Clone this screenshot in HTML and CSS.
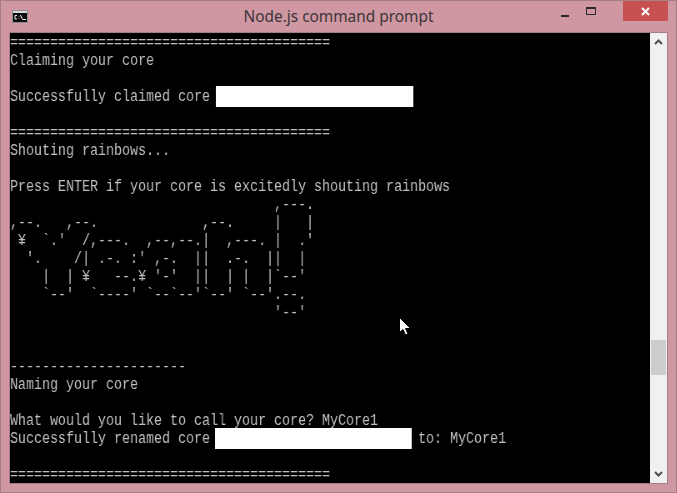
FILE: index.html
```html
<!DOCTYPE html>
<html lang="en">
<head>
<meta charset="utf-8">
<title>Node.js command prompt</title>
<link rel="stylesheet" href="styles.css">
</head>
<body>
<div class="window">
  <header class="titlebar">
    <svg class="app-icon" width="16" height="13" viewBox="0 0 16 13" aria-hidden="true">
      <rect x="0" y="0" width="16" height="13" fill="#8e8e8e"/>
      <rect x="1" y="1" width="14" height="2" fill="#d8d8d8"/>
      <rect x="1" y="3" width="14" height="9" fill="#0a0a0a"/>
      <path d="M5 5.500H3V9H5M7 6V6.500M7 8.500V9M8.500 5L10.500 9.500M11 9.500H14" fill="none" stroke="#f0f0f0" stroke-width="1"/>
    </svg>
    <div class="title">Node.js command prompt</div>
    <div class="controls">
      <div class="btn"><span class="min-glyph"></span></div>
      <div class="btn"><span class="max-glyph"></span></div>
      <div class="btn close">
        <svg width="9" height="9" viewBox="0 0 9 9" aria-hidden="true"><path d="M1 1L8 8M8 1L1 8" stroke="#fff" stroke-width="2"/></svg>
      </div>
    </div>
  </header>
  <main class="client">
    <div class="term">
      <div class="screen">
<pre class="block">========================================
Claiming your core

Successfully claimed core <span class="mask mask-a"></span></pre>
<pre class="block">

========================================
Shouting rainbows...

Press ENTER if your core is excitedly shouting rainbows
                                 ,---.
,--.   ,--.             ,--.     |   |
 ¥  `.'  /,---.  ,--,--.|  ,---. |  .'
  '.    /| .-. :' ,-.  ||  .-.  ||  |
    |  | ¥   --.¥ '-'  ||  | |  |`--'
    `--'  `----' `--`--'`--' `--'.--.
                                 '--'


----------------------
Naming your core

What would you like to call your core? MyCore1</pre>
<pre class="block">Successfully renamed core <span class="mask mask-b"></span> to: MyCore1</pre>
<pre class="block">

========================================</pre>
      </div>
      <svg class="pointer" width="13" height="19" viewBox="0 0 13 19" aria-hidden="true">
        <path d="M.5 .5V15.500L4 12.500L6.500 18L9 17L6.500 11.500H11.500Z" fill="#fff" stroke="#000" stroke-width="1"/>
      </svg>
    </div>
    <aside class="scrollbar">
      <svg class="arrow" width="9" height="6" viewBox="0 0 9 6" aria-hidden="true"><path d="M1 5L4.500 1.500L8 5" fill="none" stroke="#505050" stroke-width="2"/></svg>
      <div class="track"><div class="thumb"></div></div>
      <svg class="arrow" width="9" height="6" viewBox="0 0 9 6" aria-hidden="true"><path d="M1 1L4.500 4.500L8 1" fill="none" stroke="#505050" stroke-width="2"/></svg>
    </aside>
  </main>
</div>
</body>
</html>
```
FILE: styles.css
```css
* { box-sizing: border-box; }
html, body { margin: 0; padding: 0; background: #cf97a2; }
.window {
  width: 677px;
  height: 493px;
  display: flex;
  flex-direction: column;
  background: #cf97a2;
  border: 1px solid #a67d85;
  overflow: hidden;
}
.titlebar {
  position: relative;
  height: 30px;
  flex: none;
  display: flex;
  align-items: flex-start;
  padding-left: 11px;
  margin-bottom: 1px;
}
.app-icon { margin-top: 9px; flex: none; }
.title {
  position: absolute;
  left: 0;
  right: 0;
  top: 6px;
  text-align: center;
  font: 15.400px/20px "Noto Sans", "Open Sans", sans-serif;
  color: #3c3438;
}
.controls {
  position: relative;
  margin-left: auto;
  margin-right: 8px;
  display: flex;
}
.btn {
  height: 20px;
  width: 26px;
  display: flex;
  align-items: center;
  justify-content: center;
}
.btn.close { width: 45px; background: #c75050; margin-left: 19px; }
.min-glyph { display: block; width: 8px; height: 2px; background: #2a2a2a; margin-top: 9px; }
.max-glyph { display: block; width: 10px; height: 8px; border: 1px solid #2a2a2a; border-top-width: 2px; }
.client {
  flex: none;
  width: 659px;
  height: 452px;
  margin-left: 8px;
  display: flex;
  border: 1px solid #a67d85;
}
.term {
  position: relative;
  width: 640px;
  height: 450px;
  background: #000;
  overflow: hidden;
}
.screen {
  padding-top: 1px;
  width: 768px;
  transform: scaleX(0.83333);
  transform-origin: 0 0;
  will-change: transform;
}
.block {
  margin: 0;
  font: 16px/18px "Liberation Mono", monospace;
  color: #c0c0c0;
}
.mask {
  display: inline-block;
  vertical-align: top;
  width: 236.400px;
  height: 21px;
  background: #fff;
  margin-top: -2px;
  margin-bottom: -1px;
}
.mask-a { margin-left: -2.400px; }
.mask-b { margin-left: -3.600px; margin-right: -2.400px; }
.pointer { position: absolute; left: 389px; top: 284px; }
.scrollbar {
  width: 17px;
  background: #f0f0f0;
  display: flex;
  flex-direction: column;
  align-items: center;
}
.arrow { flex: none; margin: 6px 0; }
.track { flex: 1; width: 100%; padding: 0 1px; position: relative; }
.thumb {
  position: absolute;
  left: 1px;
  right: 1px;
  top: 289px;
  height: 35px;
  background: #cdcdcd;
}
```
